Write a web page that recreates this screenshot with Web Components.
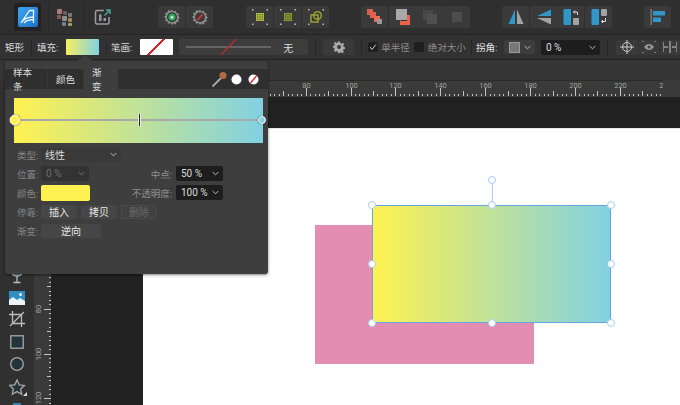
<!DOCTYPE html>
<html><head><meta charset="utf-8">
<style>
html,body{margin:0;padding:0;background:#212121}
body{width:680px;height:405px;overflow:hidden;font:9.5px Roboto,"Noto Sans CJK SC",sans-serif;color:#ddd}
af-btn svg,af-tools svg{display:block}
.sp{display:inline-block}
</style></head><body>
<af-app>
  <af-bar slot="top" style="--h:34px;--bg:#2f2f2f">
    <af-logo></af-logo>
    <af-sep style="margin:0 7px 0 7px"></af-sep>
    <svg width="18" height="18" viewBox="0 0 18 18" style="margin-right:10px">
      <rect x="1" y="1" width="5" height="5" rx="1" fill="#a87c80"/><rect x="7" y="3" width="4" height="4" rx="1" fill="#6f5a5c"/><rect x="12" y="5" width="4" height="4" rx="1" fill="#7a7a7a"/>
      <rect x="1" y="7" width="4" height="4" rx="1" fill="#8d5a5c"/><rect x="6" y="8" width="5" height="5" rx="1" fill="#8f8f8f"/><rect x="12" y="10" width="4" height="4" rx="1" fill="#a08a5e"/>
      <rect x="6" y="14" width="4" height="4" rx="1" fill="#6f7f8f"/><rect x="12" y="15" width="4" height="3" rx="1" fill="#b09a6a"/>
    </svg>
    <af-sep style="margin-right:9px"></af-sep>
    <svg width="18" height="18" viewBox="0 0 18 18" style="margin-right:46px" fill="none">
      <path d="M10 2.5H3a1.5 1.5 0 0 0-1.500 1.500v10.500A1.500 1.500 0 0 0 3 16h10.500a1.500 1.500 0 0 0 1.500-1.500V9" stroke="#9a9aa8" stroke-width="1.500"/>
      <path d="M5 6.500v6.500h2.500V6.500zM9.500 10v3h2.500v-3z" fill="#9a9a9a"/><path d="M10.500 7.500 15.500 2.500M12 2h4v4" stroke="#46a89a" stroke-width="1.500"/>
    </svg>
    <af-btn><svg width="18" height="18" viewBox="0 0 18 18"><path d="M9 1.500l1.500 2 2.400-.8.600 2.400 2.400.6-.8 2.400 2 1.400-2 1.500.8 2.400-2.400.6-.6 2.400-2.400-.8L9 17l-1.500-2-2.400.8-.6-2.400-2.400-.6.8-2.400-2-1.500 2-1.400-.8-2.400 2.400-.6.600-2.400 2.400.8z" fill="#8d8d8d"/><circle cx="9" cy="9.200" r="5" fill="#333"/><circle cx="9" cy="9.200" r="3.600" fill="#2aa65a"/><circle cx="9" cy="9.200" r="1.500" fill="#cfe9d8"/></svg></af-btn>
    <af-btn style="margin-left:1px"><svg width="18" height="18" viewBox="0 0 18 18"><path d="M9 1.500l1.500 2 2.400-.8.600 2.400 2.400.6-.8 2.400 2 1.400-2 1.500.8 2.400-2.400.6-.6 2.400-2.400-.8L9 17l-1.500-2-2.400.8-.6-2.400-2.400-.6.8-2.400-2-1.500 2-1.400-.8-2.400 2.400-.6.600-2.400 2.400.8z" fill="#8d8d8d"/><circle cx="9" cy="9.200" r="5" fill="#3a3a3a"/><path d="M6.500 12 11.500 6.500" stroke="#d0312d" stroke-width="2"/></svg></af-btn>
    <af-btn style="margin-left:33px"><af-grid-ic></af-grid-ic></af-btn>
    <af-btn style="margin-left:1px"><af-grid-ic style="--c:#9aa334;--n:1"></af-grid-ic></af-btn>
    <af-btn style="margin-left:1px"><svg width="18" height="18" viewBox="0 0 18 18" fill="none"><g fill="#bbb"><rect x="1" y="1" width="1.500" height="1.500"/><rect x="15.500" y="1" width="1.500" height="1.500"/><rect x="1" y="15.500" width="1.500" height="1.500"/><rect x="15.500" y="15.500" width="1.500" height="1.500"/></g><rect x="4" y="7" width="7" height="7" stroke="#98a030" stroke-width="1.500"/><circle cx="10.500" cy="7.500" r="3.800" stroke="#98a030" stroke-width="1.500"/></svg></af-btn>
    <af-btn style="margin-left:32px"><svg width="18" height="18" viewBox="0 0 18 18"><rect x="1" y="1" width="6" height="6" fill="#d8604f"/><rect x="4" y="4" width="6" height="6" fill="#e5604c"/><rect x="8" y="8" width="6" height="6" fill="#f06a52"/><rect x="11" y="11" width="5" height="5" fill="#999"/><rect x="8" y="1" width="0" height="0"/></svg></af-btn>
    <af-btn style="margin-left:1px"><svg width="18" height="18" viewBox="0 0 18 18"><rect x="6" y="7" width="10" height="10" fill="#f0614a"/><rect x="2" y="1" width="11" height="11" fill="#a8a8a8"/><rect x="6.500" y="12" width="6.500" height="1" fill="#333"/></svg></af-btn>
    <af-btn style="margin-left:0"><svg width="18" height="18" viewBox="0 0 18 18"><rect x="2" y="2" width="10" height="10" fill="#484848"/><rect x="6" y="6" width="10" height="10" fill="#4f4f4f"/></svg></af-btn>
    <af-btn style="margin-left:0"><svg width="18" height="18" viewBox="0 0 18 18"><rect x="4" y="4" width="10" height="10" fill="#4d4d4d"/></svg></af-btn>
    <af-btn style="margin-left:32px"><svg width="18" height="18" viewBox="0 0 18 18"><path d="M8 1.500V16H1.500z" fill="#2f98c8"/><path d="M10 1.500V16h6.500z" fill="#a3a3a3"/></svg></af-btn>
    <af-btn style="margin-left:1px"><svg width="18" height="18" viewBox="0 0 18 18"><path d="M16 1.500V8H2z" fill="#2f98c8"/><path d="M16 16.500V10H2z" fill="#a3a3a3"/></svg></af-btn>
    <af-btn style="margin-left:0"><svg width="18" height="18" viewBox="0 0 18 18"><rect x="1.500" y="1" width="7.500" height="16" rx="1" fill="#2f98c8"/><rect x="11" y="10" width="6" height="7" rx="1" fill="#a3a3a3"/><path d="M11.500 4h4v3M13 2.500 11.500 4 13 5.500" fill="none" stroke="#ddd"/></svg></af-btn>
    <af-btn style="margin-left:1px"><svg width="18" height="18" viewBox="0 0 18 18"><rect x="1.500" y="1" width="7.500" height="16" rx="1" fill="#2f98c8"/><rect x="11" y="1" width="6" height="7" rx="1" fill="#a3a3a3"/><path d="M15.500 10v3.500h-4M13 12l-1.500 1.500L13 15" fill="none" stroke="#ddd"/></svg></af-btn>
    <af-btn style="margin-left:32px"><svg width="18" height="18" viewBox="0 0 18 18"><rect x="1.500" y="1" width="1.500" height="16" fill="#777"/><rect x="4" y="3" width="12" height="4.500" fill="#2f98c8"/><rect x="4" y="9.500" width="8" height="4.500" fill="#2f98c8"/></svg></af-btn>
  </af-bar>
  <af-bar slot="ctx" style="--h:24px;--bg:#323232;--pl:5px">
    <span style="width:21px">矩形</span><af-sep style="margin:0 5px 0 6px;height:16px"></af-sep>
    <span style="width:23px">填充:</span>
    <af-swatch style="margin-left:7px;width:33px;--f:linear-gradient(90deg,#f8ef60,#81d1e3)"></af-swatch>
    <af-sep style="margin:0 4px 0 7px;height:16px"></af-sep>
    <span style="width:23px">笔画:</span>
    <af-swatch style="margin-left:7px;width:33px;--f:linear-gradient(135deg,#fff 46%,#d62a2a 46%,#d62a2a 52%,#fff 52%)"></af-swatch>
    <af-stroke style="margin-left:6px"><span>无</span></af-stroke>
    <af-sep style="margin:0 7px;height:16px"></af-sep>
    <af-btn style="--w:31px;--bh:16px"><svg width="12" height="12" viewBox="0 0 12 12"><path d="M5 .5h2l.3 1.600 1.300.6L10 1.800l1.200 1.500-1 1.300.4 1.100 1.400.6v1.700l-1.500.3-.5 1.300.9 1.300-1.400 1.300-1.300-.9-1.300.5L7 12H5l-.3-1.500-1.300-.5-1.300.9L.8 9.600l.9-1.300-.5-1.300L0 6.700V5l1.400-.4.4-1.100-1-1.400L2 .9l1.400 1 1.300-.5z" fill="#aaa"/><circle cx="6" cy="6" r="2" fill="#3a3a3a"/></svg></af-btn>
    <af-sep style="margin:0 6px 0 7px;height:16px"></af-sep>
    <af-check on></af-check><span style="margin-left:3px;width:31px;color:#8e8e8e">单半径</span>
    <af-check style="margin-left:3px"></af-check><span style="margin-left:4px;width:40px;color:#8e8e8e">绝对大小</span>
    <af-sep style="margin:0 4px 0 5px;height:16px"></af-sep>
    <span style="margin-left:0;width:25px;color:#e4e4e4">拐角:</span>
    <af-select style="margin-left:4px;--w:31px;--h:14px;--bg:#3d3d3d"><span style="display:block;width:11px;height:11px;background:#777;border:1px solid #999;box-sizing:border-box"></span></af-select>
    <af-select style="margin-left:6px;--w:59px;--h:15px;--bg:#1d1d1d">0 %</af-select>
    <af-sep style="margin:0 8px 0 7px;height:16px"></af-sep>
    <af-btn style="--w:22px;--bh:15px"><svg width="14" height="14" viewBox="0 0 14 14" fill="none" stroke="#ccc"><circle cx="7" cy="7" r="4.500"/><path d="M7 0v14M0 7h14"/></svg></af-btn>
    <af-btn style="--w:20px;--bh:15px;margin-left:1px"><svg width="14" height="12" viewBox="0 0 14 12"><path d="M2 6c3-4 7-4 10 0-3 4-7 4-10 0z" fill="#999"/><circle cx="7" cy="6" r="1.500" fill="#444"/><path d="M0 0h2M12 0h2M0 12h2M12 12h2" stroke="#bbb"/></svg></af-btn>
    <af-btn style="--w:20px;--bh:15px;margin-left:1px"><svg width="14" height="12" viewBox="0 0 14 12" fill="none" stroke="#ccc"><path d="M7 0v12M1 6h4M9 6h4M0 1v10M14 1v10"/></svg></af-btn>
  </af-bar>
  <af-strip slot="strip"></af-strip>
  <af-tools slot="tools">
    <svg width="16" height="16" viewBox="0 0 16 16" fill="none" stroke="#bbb" stroke-width="1.300"><path d="M2 1c0 5 3 7 6 7s6-2 6-7z" fill="#2f7fa8"/><path d="M8 8v6M4.500 14.500h7"/></svg>
    <svg width="16" height="14" viewBox="0 0 16 14"><rect width="16" height="14" fill="#2f8fc0"/><path d="M0 14V9l4-3 4 3 3-2 5 3v4z" fill="#e8f4fa"/><circle cx="11.500" cy="3.500" r="1.500" fill="#e8f4fa"/></svg>
    <svg width="16" height="16" viewBox="0 0 16 16" fill="none" stroke="#bdbdbd" stroke-width="1.300"><path d="M3.500 0v12.500H16M0 3.500h12.500V16M1 15 15 1" /></svg>
    <svg width="16" height="16" viewBox="0 0 16 16"><rect x=".8" y=".8" width="12.400" height="12.400" transform="translate(1 1)" fill="#25333a" stroke="#a8a8a8" stroke-width="1.300"/></svg>
    <svg width="16" height="16" viewBox="0 0 16 16"><circle cx="8" cy="8" r="6.300" fill="#25333a" stroke="#a8a8a8" stroke-width="1.300"/></svg>
    <svg width="19" height="18" viewBox="0 0 19 18" style="margin-left:2px"><path d="M8 1l2.200 4.800 5.300.6-3.900 3.600 1.100 5.200L8 12.600 3.300 15.200l1.100-5.200L.5 6.400l5.300-.6z" fill="#25333a" stroke="#a8a8a8" stroke-width="1.300"/><path d="M18 13v4h-4z" fill="#ddd"/></svg>
    <svg width="16" height="16" viewBox="0 0 16 16"><rect x="4" width="8" height="16" fill="#3a7fb0"/></svg>
  </af-tools>
  <af-ruler slot="hr" dir="h"></af-ruler>
  <af-ruler slot="vr" dir="v"></af-ruler>
  <af-page slot="page">
    <af-shape style="left:172px;top:96px;width:219px;height:139px;--f:#e38db2"></af-shape>
    <af-shape style="left:229px;top:76px;width:239px;height:118px;--f:linear-gradient(90deg,#fff250,#81d1e3)" selected></af-shape>
  </af-page>
  <af-popover slot="pop"></af-popover>
</af-app>
<script>
function def(name,html,extra){
  const t=document.createElement('template');t.innerHTML=html;
  customElements.define(name,class extends HTMLElement{
    constructor(){super();this.attachShadow({mode:'open'}).appendChild(t.content.cloneNode(true));}
    connectedCallback(){if(extra)extra.call(this,this.shadowRoot);}
  });
}
def('af-app',`<style>
:host{display:grid;width:680px;height:405px;overflow:hidden;position:relative;grid-template-columns:34px 17px 1fr;grid-template-rows:35px 25px 20px 17px 1fr;background:#212121}
.a{grid-column:1/-1}
.t{grid-column:1;grid-row:4/6;overflow:hidden;background:#303030}
.c{grid-column:1/3;grid-row:4;background:#3a3a3a;visibility:hidden}
.h{grid-column:2/4;grid-row:4}
.v{grid-column:2;grid-row:5;overflow:hidden}
.p{grid-column:3;grid-row:5;min-height:0;overflow:hidden}
</style>
<div class="a"><slot name="top"></slot></div><div class="a"><slot name="ctx"></slot></div><div class="a"><slot name="strip"></slot></div>
<div class="t"><slot name="tools"></slot></div><div class="h"><slot name="hr"></slot></div><div class="v"><slot name="vr"></slot></div><div class="p"><slot name="page"></slot></div><slot name="pop"></slot>`);
def('af-bar',`<style>:host{display:flex;align-items:center;box-sizing:content-box;height:var(--h);background:var(--bg);border-bottom:1px solid #242424;padding-left:var(--pl,14px);white-space:nowrap}</style><slot></slot>`);
def('af-logo',`<style>:host{display:flex;align-items:center;justify-content:center;width:27px;height:28px;background:#222;border-radius:2px}</style>
<svg width="20" height="20" viewBox="0 0 20 20" fill="none"><defs><linearGradient id="g" x1="0" y1="0" x2="1" y2="1"><stop offset="0" stop-color="#3ca8f0"/><stop offset="1" stop-color="#1d6fc4"/></linearGradient></defs><rect width="20" height="20" rx="2" fill="url(#g)"/><path d="M3 16 11.500 3.500h4V16M3 16c3-5 7-6 12.500-6M6 16c3-3 5-3.500 9.500-3.500" stroke="#e8f6ff" stroke-width="1.300"/></svg>`);
def('af-sep',`<style>:host{display:block;width:1px;height:26px;background:#262626;flex:none}</style>`);
def('af-btn',`<style>:host{display:flex;align-items:center;justify-content:center;flex:none;width:var(--w,27px);height:var(--bh,22px);background:#3a3a3a;border-radius:2px}</style><slot></slot>`);
def('af-grid-ic',`<style>:host{display:block;width:18px;height:18px}</style><svg width="18" height="18" viewBox="0 0 18 18"></svg>`,function(r){
  const s=r.querySelector('svg');const c=getComputedStyle(this);const col=c.getPropertyValue('--c').trim()||'#c4d04a';const n=c.getPropertyValue('--n').trim();
  let h='';[[1,1],[15.5,1],[1,15.5],[15.5,15.5],[8.2,1],[8.2,15.5],[1,8.2],[15.5,8.2]].forEach(p=>{if(p[0]==8.2||p[1]==8.2)return;h+=`<rect x="${p[0]}" y="${p[1]}" width="1.500" height="1.500" fill="#bbb"/>`});
  h+=`<rect x="5" y="5" width="8" height="8" fill="${n?'#5e6228':'#6c7228'}"/>`;
  for(let i=0;i<4;i++){h+=`<path d="M${5.5+i*2.3} 5v8M5 ${5.5+i*2.3}h8" stroke="${col}" stroke-width=".7"/>`}
  s.innerHTML=h;
});
def('af-swatch',`<style>:host{display:block;flex:none;height:16px;background:var(--f);border-radius:1px}</style>`);
def('af-stroke',`<style>:host{display:flex;align-items:center;flex:none;width:129px;height:16px;background:#3d3d3d;border-radius:2px;position:relative;box-sizing:border-box}
svg{margin-left:7px;flex:none}div{margin-left:12px;font-size:10px;color:#ddd}</style>
<svg width="85" height="16"><path d="M0 8h85" stroke="#8c8c8c"/><path d="M35 16 50 0" stroke="#c8282c" stroke-width="1.200"/></svg><div><slot></slot></div>`);
def('af-check',`<style>:host{display:flex;align-items:center;justify-content:center;flex:none;width:10px;height:10px;background:#1f1f1f;border-radius:2px}svg{display:none}:host([on]) svg{display:block}</style><svg width="8" height="8" viewBox="0 0 8 8"><path d="M1 4l2 2.500L7 1.500" fill="none" stroke="#ccc"/></svg>`);
def('af-select',`<style>:host{display:flex;align-items:center;flex:none;box-sizing:border-box;width:var(--w);height:var(--h,15px);background:var(--bg,#1d1d1d);border-radius:2px;padding:0 4px;color:var(--c,#ddd);font:10px Roboto,"Noto Sans CJK SC",sans-serif}
.l{flex:1;min-width:0;padding-left:var(--pad,1px)}svg{flex:none}</style><div class="l"><slot></slot></div><svg width="7" height="5" viewBox="0 0 7 5"><path d="M.7 1l2.800 2.800L6.300 1" fill="none" stroke="var(--ac,#bbb)" stroke-width="1"/></svg>`);
def('af-strip',`<style>:host{display:block;height:20px;background:#363636;border-bottom:0}</style>`);
def('af-tools',`<style>:host{display:flex;flex-direction:column;align-items:center;gap:6.500px;padding:188px 0 0 0;box-sizing:border-box;background:#303030;height:100%}::slotted(svg){flex:none}</style><slot></slot>`);
def('af-ruler',`<style>:host{display:block;background:#3a3a3a;overflow:hidden}svg{display:block}</style><svg></svg>`,function(r){
  const s=r.querySelector('svg');const h=this.getAttribute('dir')=='h';let o='';
  const u=2.245;
  if(h){
    s.setAttribute('width',629);s.setAttribute('height',17);o='<rect width="629" height="1" fill="#2a2a2a"/>';
    const x0=143-51;
    for(let v=-40;v<=240;v+=2){const x=(x0+v*u)+.5|0;const L=v%20==0?8:v%10==0?5:2;o+=`<rect x="${x}" y="${16-L}" width="1" height="${L}" fill="#c4c4c4"/>`;
      if(v%20==0)o+=`<text x="${x+.5}" y="8" font-size="7.500" font-family="Roboto" text-anchor="middle" fill="#a4a4a4">${v}</text>`;}
  }else{
    s.setAttribute('width',17);s.setAttribute('height',308);o='';
    const y0=32;
    for(let v=-10;v<=124;v+=2){const y=(y0+v*u)+.5|0;const L=v%20==0?7:v%10==0?4:2;o+=`<rect x="${17-L}" y="${y}" width="${L}" height="1" fill="#c4c4c4"/>`;
      if(v%20==0)o+=`<text transform="translate(7 ${y}) rotate(-90)" font-size="7.500" font-family="Roboto" text-anchor="middle" fill="#a4a4a4">${v}</text>`;}
  }
  s.innerHTML=o;
});
def('af-page',`<style>:host{display:block;height:100%;padding:32px 0 0 92px;box-sizing:border-box;background:#212121}.w{background:#fff;height:100%;position:relative;border-top:1px solid #e8e8e8;box-sizing:border-box;margin-top:-1px;height:calc(100% + 1px)}</style><div class="w"><slot></slot></div>`);
def('af-shape',`<style>:host{display:block;position:absolute;background:var(--f)}
.s{display:none;position:absolute;inset:0;border:1.500px solid #62a6e8;box-sizing:border-box}
:host([selected]) .s{display:block}
i{position:absolute;width:6px;height:6px;border-radius:50%;background:#fff;border:1.500px solid #a9cbf4;transform:translate(-50%,-50%);box-sizing:content-box}
b{position:absolute;left:50%;top:-25px;height:25px;width:1px;background:#a9cbf4}
.h{position:absolute;inset:0}
</style><div class="s"></div><div class="s h" style="border:0"><b></b>
<i style="left:0;top:0"></i><i style="left:50%;top:0"></i><i style="left:100%;top:0"></i>
<i style="left:0;top:50%"></i><i style="left:100%;top:50%"></i>
<i style="left:0;top:100%"></i><i style="left:50%;top:100%"></i><i style="left:100%;top:100%"></i>
<i style="left:50%;top:-25px"></i></div>`);
def('af-tab',`<style>:host{display:flex;align-items:center;justify-content:center;flex:none;height:20px;padding:0 8px;color:#ddd;border-right:1px solid #383838;box-sizing:border-box;width:var(--w)}:host([active]){background:#3e3e3e;border-right:0}</style><slot></slot>`);
def('af-fbtn',`<style>:host{display:flex;align-items:center;justify-content:center;flex:none;height:14px;width:var(--w,36px);background:#464646;border-radius:2px;color:#e8e8e8;font-size:10px}:host([off]){color:#6a6a6a;background:#414141;border:1px solid #4a4a4a;box-sizing:border-box}</style><slot></slot>`);
def('af-popover',`<style>
:host{display:block;position:absolute;left:5px;top:61px;width:263px;height:213px;background:#3e3e3e;border-radius:3px;box-shadow:0 1px 3px rgba(0,0,0,.5);color:#ddd}
.arr{position:absolute;left:72px;top:-6px;width:0;height:0;border:8px solid transparent;border-top:0;border-bottom:6px solid #3e3e3e}
.tabs{display:flex;align-items:center;margin-top:4px;height:20px;background:#2f2f2f;position:relative;top:4px}
.ic{margin-left:auto;margin-right:9px;display:flex;align-items:center;gap:3px}
.gb{position:relative;margin:9px 5.500px 0 9px;height:45px;background:linear-gradient(90deg,#fff250,#81d1e3);margin-top:13px}
.ln{position:absolute;left:0;right:0;top:21px;height:2px;background:#a9a9a9}
.mid{position:absolute;left:124px;top:16px;width:1px;height:12px;background:#222;border:solid #eee;border-width:0 1px}
.k{position:absolute;top:50%;border-radius:50%;transform:translate(-50%,-50%);border:1.500px solid #fff;box-shadow:0 0 1px #222}
.f{display:grid;grid-template-columns:24px 48px 87px 47px;grid-auto-rows:15px;row-gap:4px;margin:4px 0 0 12px;align-items:center}
.lb{color:#858585}.r{justify-self:end;padding-right:4px;color:#8e8e8e}
.row{grid-column:2/5;display:flex;gap:4px;align-items:center}
</style><div class="arr"></div>
<div class="tabs"><af-tab style="--w:43px">样本条</af-tab><af-tab style="--w:36px">颜色</af-tab><af-tab active style="--w:34px">渐变</af-tab>
<div class="ic"><svg width="17" height="17" viewBox="0 0 17 17"><path d="M1.500 15.500 10 7" stroke="#aaa" stroke-width="1.800"/><circle cx="12" cy="4.500" r="3.500" fill="#b06a4a"/></svg>
<svg width="11" height="11"><circle cx="5.500" cy="5.500" r="5" fill="#fff"/></svg>
<svg width="11" height="11" style="margin-left:3px"><circle cx="5.500" cy="5.500" r="5" fill="#fff"/><path d="M2.500 9 8.500 2" stroke="#d83030" stroke-width="1.500"/></svg></div></div>
<div class="gb"><div class="ln"></div><div class="mid"></div>
<div class="k" style="left:1px;top:22px;width:9px;height:9px;background:#fff250"></div><div class="k" style="left:248px;top:22px;width:6px;height:6px;background:#81d1e3"></div></div>
<div class="f">
<span class="lb">类型:</span><af-select style="grid-column:2/4;--w:80px;--h:14px;--bg:#3a3a3a;--pad:0">线性</af-select>
<span></span>
<span class="lb">位置:</span><af-select style="--w:48px;--bg:#333;--c:#6f6f6f;--ac:#777">0 %</af-select><span class="r">中点:</span><af-select style="--w:47px">50 %</af-select>
<span class="lb">颜色:</span><span style="width:49px;height:16px;background:#fff250;border-radius:2px"></span><span class="r">不透明度:</span><af-select style="--w:47px">100 %</af-select>
<span class="lb">停靠:</span><div class="row"><af-fbtn>插入</af-fbtn><af-fbtn>拷贝</af-fbtn><af-fbtn off>删除</af-fbtn></div>
<span class="lb">渐变:</span><div class="row"><af-fbtn style="--w:60px">逆向</af-fbtn></div>
</div>`);
</script>
</body></html>
